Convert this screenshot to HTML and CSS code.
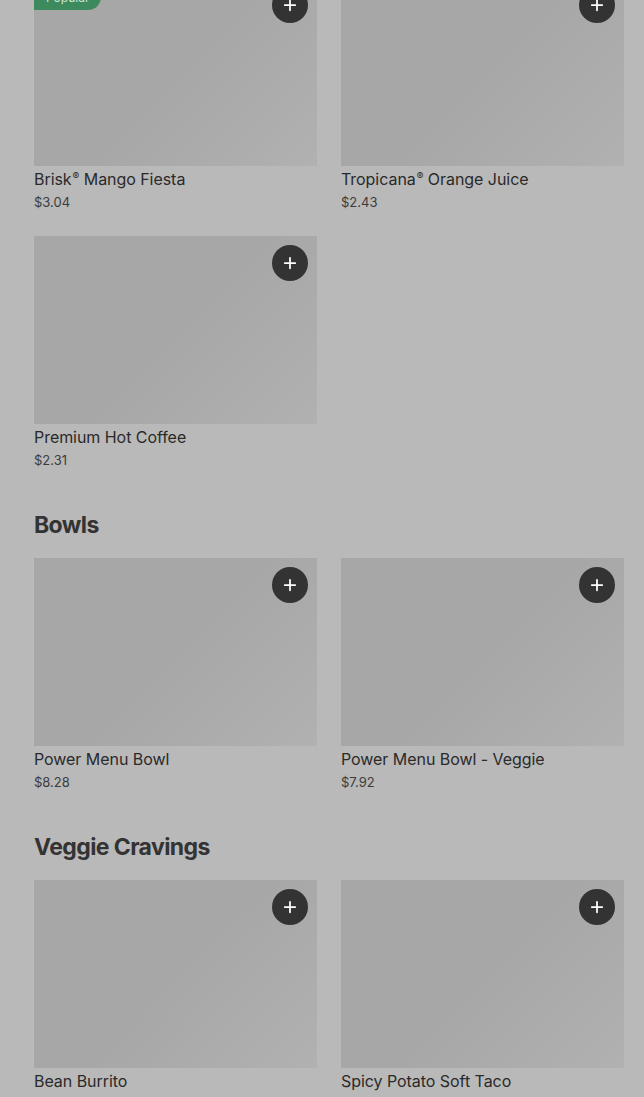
FILE: index.html
```html
<!DOCTYPE html>
<html lang="en">
<head>
<meta charset="utf-8">
<title>Menu</title>
<link rel="stylesheet" href="styles.css">
</head>
<body>
<main class="menu">
  <section class="section section-first">
    <div class="grid">
      <article class="card">
        <div class="media">
          <span class="badge">Popular</span>
          <button class="add" aria-label="Add"><svg viewBox="0 0 16 16" width="14" height="14"><path d="M8 2v12M2 8h12" stroke="#fff" stroke-width="2" stroke-linecap="round"/></svg></button>
        </div>
        <h3 class="name">Brisk<span class="reg">®</span> Mango Fiesta</h3>
        <p class="price">$3.04</p>
      </article>
      <article class="card">
        <div class="media">
          <button class="add" aria-label="Add"><svg viewBox="0 0 16 16" width="14" height="14"><path d="M8 2v12M2 8h12" stroke="#fff" stroke-width="2" stroke-linecap="round"/></svg></button>
        </div>
        <h3 class="name">Tropicana<span class="reg">®</span> Orange Juice</h3>
        <p class="price">$2.43</p>
      </article>
      <article class="card">
        <div class="media">
          <button class="add" aria-label="Add"><svg viewBox="0 0 16 16" width="14" height="14"><path d="M8 2v12M2 8h12" stroke="#fff" stroke-width="2" stroke-linecap="round"/></svg></button>
        </div>
        <h3 class="name">Premium Hot Coffee</h3>
        <p class="price">$2.31</p>
      </article>
    </div>
  </section>

  <section class="section">
    <h2 class="heading">Bowls</h2>
    <div class="grid">
      <article class="card">
        <div class="media">
          <button class="add" aria-label="Add"><svg viewBox="0 0 16 16" width="14" height="14"><path d="M8 2v12M2 8h12" stroke="#fff" stroke-width="2" stroke-linecap="round"/></svg></button>
        </div>
        <h3 class="name">Power Menu Bowl</h3>
        <p class="price">$8.28</p>
      </article>
      <article class="card">
        <div class="media">
          <button class="add" aria-label="Add"><svg viewBox="0 0 16 16" width="14" height="14"><path d="M8 2v12M2 8h12" stroke="#fff" stroke-width="2" stroke-linecap="round"/></svg></button>
        </div>
        <h3 class="name">Power Menu Bowl - Veggie</h3>
        <p class="price">$7.92</p>
      </article>
    </div>
  </section>

  <section class="section">
    <h2 class="heading">Veggie Cravings</h2>
    <div class="grid">
      <article class="card">
        <div class="media">
          <button class="add" aria-label="Add"><svg viewBox="0 0 16 16" width="14" height="14"><path d="M8 2v12M2 8h12" stroke="#fff" stroke-width="2" stroke-linecap="round"/></svg></button>
        </div>
        <h3 class="name">Bean Burrito</h3>
        <p class="price">$1.99</p>
      </article>
      <article class="card">
        <div class="media">
          <button class="add" aria-label="Add"><svg viewBox="0 0 16 16" width="14" height="14"><path d="M8 2v12M2 8h12" stroke="#fff" stroke-width="2" stroke-linecap="round"/></svg></button>
        </div>
        <h3 class="name">Spicy Potato Soft Taco</h3>
        <p class="price">$1.49</p>
      </article>
    </div>
  </section>
</main>
</body>
</html>
```

FILE: styles.css
```css
* { box-sizing: border-box; }

html, body {
  margin: 0;
  padding: 0;
  background: #b9b9b9;
  overflow: hidden;
}

body {
  font-family: Inter, "Liberation Sans", sans-serif;
  color: #303030;
}

.menu {
  padding: 0 20px 0 34px;
}

.section-first {
  margin-top: -22px;
}

.section + .section {
  margin-top: 40px;
}

.heading {
  margin: 0 0 18px;
  font-family: Inter, "Liberation Sans", sans-serif;
  font-size: 23px;
  line-height: 30px;
  font-weight: 700;
  letter-spacing: -0.6px;
  color: #333;
}

.grid {
  display: grid;
  grid-template-columns: 283px 283px;
  column-gap: 24px;
  row-gap: 24px;
}

.card {
  display: flex;
  flex-direction: column;
}

.media {
  position: relative;
  height: 188px;
  background: linear-gradient(135deg, #a7a7a7 0%, #a7a7a7 50%, #b1b1b1 100%);
}

.badge {
  position: absolute;
  left: 0;
  top: 6px;
  height: 26px;
  width: 67px;
  padding-left: 12px;
  display: flex;
  align-items: center;
  background: #3c8a5d;
  color: #cfe5d7;
  font-size: 12px;
  border-radius: 0 13px 13px 0;
}

.add {
  position: absolute;
  top: 9px;
  right: 9px;
  width: 36px;
  height: 36px;
  border: 0;
  padding: 0;
  border-radius: 50%;
  background: #333333;
  display: flex;
  align-items: center;
  justify-content: center;
}

.name {
  margin: 3px 0 0;
  height: 20px;
  font-size: 16px;
  line-height: 20px;
  font-weight: 400;
  letter-spacing: -0.05px;
  color: #2a2a2a;
}

.reg {
  font-size: 10px;
  line-height: 0;
  vertical-align: 5px;
  margin-left: 1px;
}

.price {
  margin: 3px 0 0;
  font-size: 13px;
  line-height: 20px;
  color: #3c3c3c;
}
```
